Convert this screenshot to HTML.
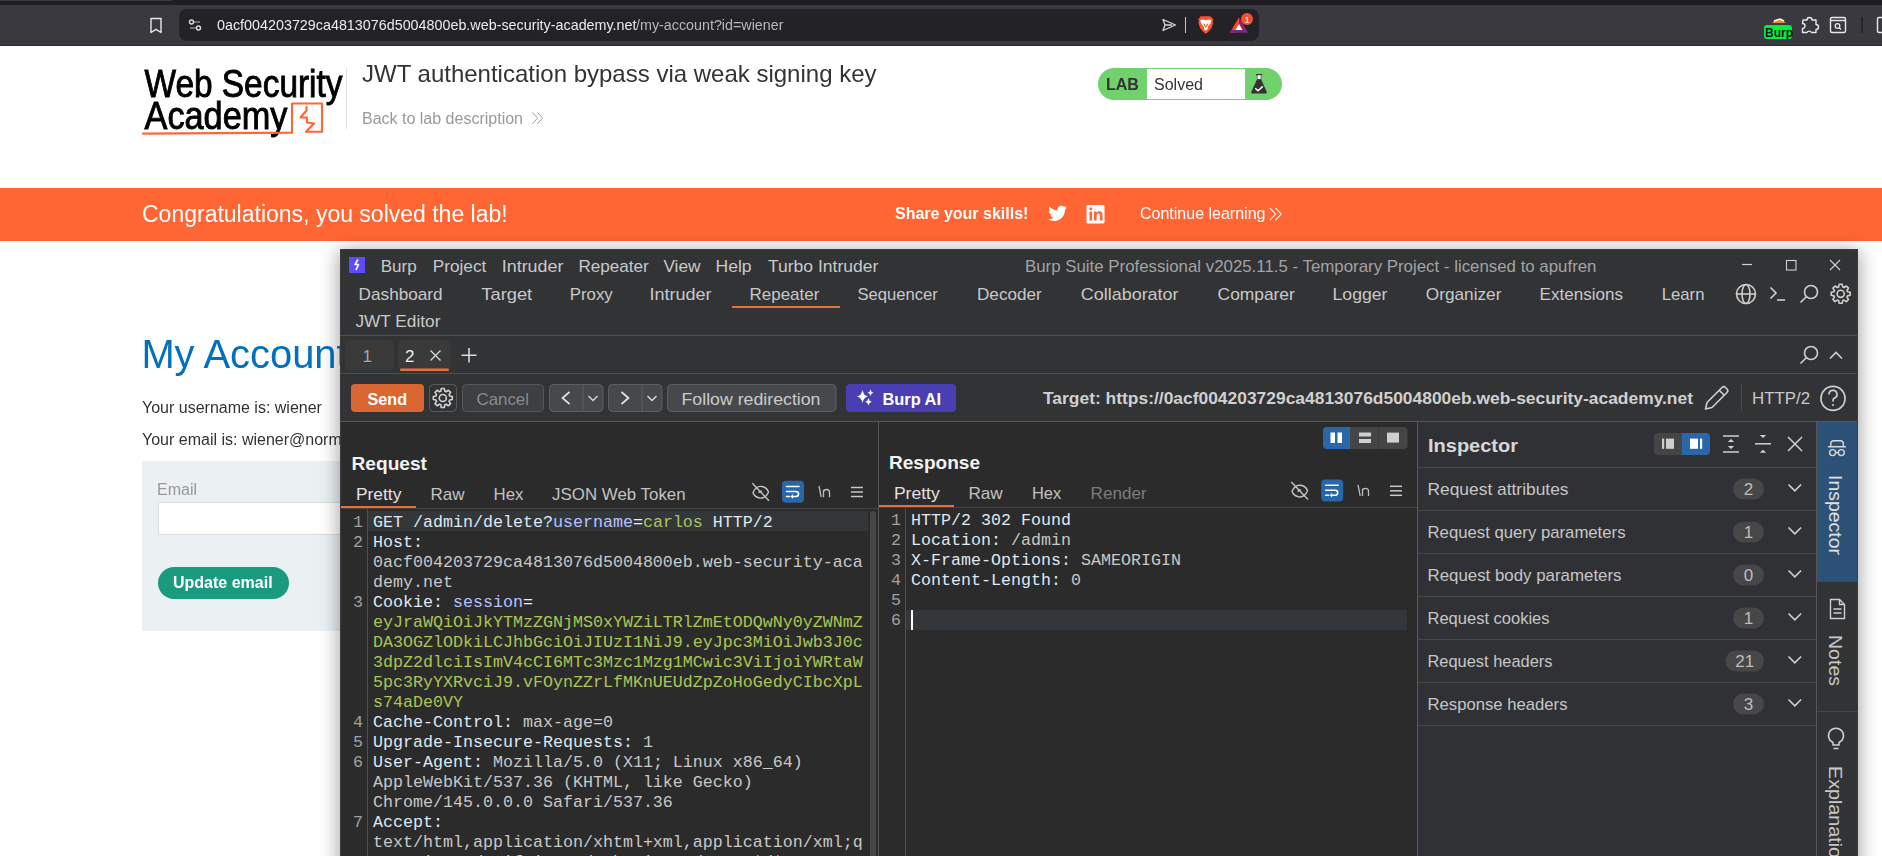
<!DOCTYPE html><html><head><meta charset="utf-8"><title>JWT authentication bypass via weak signing key</title>
<style>html,body{margin:0;padding:0;width:1882px;height:856px;overflow:hidden;background:#fff;font-family:"Liberation Sans",sans-serif}#win{position:absolute;left:340px;top:249px;width:1518px;height:620px;background:#323335;box-shadow:0 3px 18px 1px rgba(0,0,0,0.38);z-index:2}svg{position:absolute;left:0;top:0}</style></head><body>
<svg width="1882" height="856" viewBox="0 0 1882 856" style="z-index:1;will-change:transform">
<rect x="0" y="0" width="1882" height="5" rx="0" fill="#1e1d22" />
<rect x="0" y="0" width="172" height="1" rx="0" fill="#3a393f" />
<rect x="0" y="5" width="1882" height="41" rx="0" fill="#3a393f" />
<rect x="0" y="45" width="1882" height="1" rx="0" fill="#2a292e" />
<rect x="179" y="9" width="1080" height="32" rx="8" fill="#232227" />
<path d="M151 18.5 h10 v14 l-5 -3.2 l-5 3.2 z" fill="none" stroke="#e8e8e8" stroke-width="1.4" stroke-linejoin="round"/>
<circle cx="191.5" cy="22" r="2" fill="none" stroke="#e0e0e0" stroke-width="1.3"/><line x1="194" y1="22" x2="200" y2="22" stroke="#9a9a9a" stroke-width="1.3"/>
<circle cx="198.5" cy="28" r="2" fill="none" stroke="#e0e0e0" stroke-width="1.3"/><line x1="190" y1="28" x2="196" y2="28" stroke="#9a9a9a" stroke-width="1.3"/>
<text x="217" y="30" font-size="14.3" fill="#ececec" font-weight="normal" font-family="'Liberation Sans', sans-serif" textLength="419.5" lengthAdjust="spacingAndGlyphs" >0acf004203729ca4813076d5004800eb.web-security-academy.net</text>
<text x="636" y="30" font-size="14.3" fill="#b8b8b8" font-weight="normal" font-family="'Liberation Sans', sans-serif" textLength="147.5" lengthAdjust="spacingAndGlyphs" >/my-account?id=wiener</text>
<path d="M1163 19.5 L1175.5 25 L1163 30.5 L1165 25 Z M1165 25 H1172" fill="none" stroke="#d8d8d8" stroke-width="1.3" stroke-linejoin="round"/>
<rect x="1185" y="17" width="1" height="16" rx="0" fill="#c8c8c8" />
<path d="M1200.3 16.3 H1210.2 L1211.5 17.6 L1213.3 19 L1212.8 21.5 L1213.2 23 L1211.3 28.5 L1207.5 32.5 L1205.8 33.8 L1204.1 32.5 L1200.3 28.5 L1198.4 23 L1198.8 21.5 L1198.3 19 L1200.1 17.6 Z" fill="#fb542b"/>
<path d="M1200.2 20.2 L1202.8 19.4 L1205.8 20.3 L1208.8 19.4 L1211.4 20.2 L1210.5 23.5 L1208.2 26.3 L1207.2 29.8 L1205.8 30.6 L1204.4 29.8 L1203.4 26.3 L1201.1 23.5 Z" fill="#ffffff"/>
<path d="M1203.2 23.3 L1205 24.2 L1205.8 26.8 L1206.6 24.2 L1208.4 23.3 L1207.6 25.5 L1205.8 28 L1204 25.5 Z" fill="#fb542b"/>
<path d="M1239 17.5 L1248 32.5 H1230 Z" fill="#9e1f63"/><path d="M1239 17.5 L1230 32.5 H1236 L1239 23 Z" fill="#ff4724"/><path d="M1230 32.5 H1248 L1246.5 30 H1231.5 Z" fill="#662d91"/><path d="M1239 24 L1242.5 30 H1235.5 Z" fill="#fff"/>
<circle cx="1247" cy="19" r="6" fill="#f4512c"/>
<text x="1244.5" y="23" font-size="9" fill="#fff" font-weight="normal" font-family="'Liberation Sans', sans-serif" >1</text>
<rect x="1764" y="25" width="28" height="14" rx="3" fill="#00f03c" />
<text x="1765" y="37" font-size="12" fill="#111" font-weight="bold" font-family="'Liberation Sans', sans-serif" >Burp</text>
<path d="M1772 23 q6 -7 14 0 z" fill="#f08c1c"/><path d="M1774 21 l6 -2 l4 2" stroke="#fff" stroke-width="1.5" fill="none"/>
<path d="M1803 20 h4 a2.5 2.5 0 0 1 5 0 h4 v4.5 a2.5 2.5 0 0 1 0 5 v3 h-4.5 a2.5 2.5 0 0 0 -4.5 0 h-4.5 v-4 a2.5 2.5 0 0 0 0 -5 z" fill="none" stroke="#e8e8e8" stroke-width="1.4" stroke-linejoin="round"/>
<rect x="1830.5" y="17.5" width="15" height="15" rx="1.5" fill="none" stroke="#e8e8e8" stroke-width="1.4" />
<line x1="1830.5" y1="20.5" x2="1845.5" y2="20.5" stroke="#e8e8e8" stroke-width="1.4" />
<circle cx="1837.5" cy="26" r="2.3" fill="none" stroke="#e8e8e8" stroke-width="1.3"/><line x1="1839.2" y1="27.7" x2="1841" y2="29.5" stroke="#e8e8e8" stroke-width="1.3"/>
<rect x="1861" y="17" width="2" height="16" rx="0" fill="#27262b" />
<rect x="1877.5" y="17.5" width="8" height="15" rx="1.5" fill="none" stroke="#e8e8e8" stroke-width="1.4" />
<g id="logo">
<text x="144.5" y="96.5" font-size="38" fill="#000" font-weight="normal" font-family="'Liberation Sans', sans-serif" textLength="198" lengthAdjust="spacingAndGlyphs" stroke="#000" stroke-width="0.9">Web Security</text>
<text x="144.5" y="129" font-size="38" fill="#000" font-weight="normal" font-family="'Liberation Sans', sans-serif" textLength="143" lengthAdjust="spacingAndGlyphs" stroke="#000" stroke-width="0.9">Academy</text>
<path d="M143 133.6 Q220 132.8 292 132.6 V103.5 H322 V131.8 H306 L314 123.5 L307 122.5 V117.5 H300.5 L306.5 110.5 V107" stroke="#ff6633" stroke-width="2.1" fill="none" stroke-linejoin="round" stroke-linecap="round"/>
</g>
<rect x="346" y="68" width="1" height="61" rx="0" fill="#e0e0e0" />
<text x="362" y="82" font-size="24" fill="#333333" font-weight="normal" font-family="'Liberation Sans', sans-serif" >JWT authentication bypass via weak signing key</text>
<text x="362" y="124" font-size="16" fill="#999999" font-weight="normal" font-family="'Liberation Sans', sans-serif" >Back to lab description</text>
<path d="M532.4 112.3 l5.2 5.8 l-5.2 5.8 M537.4 112.3 l5.2 5.8 l-5.2 5.8" stroke="#9a9a9a" stroke-width="0.95" fill="none"/>
<rect x="1098" y="68" width="184" height="32" rx="16" fill="#70d16d" />
<rect x="1147" y="69" width="98" height="30" rx="0" fill="#ffffff" />
<text x="1106" y="89.5" font-size="16" fill="#333333" font-weight="bold" font-family="'Liberation Sans', sans-serif" >LAB</text>
<text x="1154" y="89.5" font-size="16" fill="#333333" font-weight="normal" font-family="'Liberation Sans', sans-serif" >Solved</text>
<path d="M1257.2 79 H1261 L1266.6 91.6 a1.3 1.3 0 0 1 -1.2 1.9 H1252.6 a1.3 1.3 0 0 1 -1.2 -1.9 Z" fill="#333"/>
<rect x="1256" y="74" width="6.2" height="1.4" fill="#333"/><rect x="1257.1" y="75.3" width="4" height="3.8" fill="#fff"/><rect x="1256.9" y="75.3" width="0.7" height="3.8" fill="#555"/><rect x="1260.6" y="75.3" width="0.7" height="3.8" fill="#555"/>
<path d="M1255.2 88.3 L1258 90.8 L1262.8 86.4" stroke="#fff" stroke-width="1.5" fill="none"/>
<rect x="0" y="188" width="1882" height="53" rx="0" fill="#ff6633" />
<text x="142" y="222" font-size="23" fill="#ffffff" font-weight="normal" font-family="'Liberation Sans', sans-serif" >Congratulations, you solved the lab!</text>
<text x="895" y="218.8" font-size="16" fill="#ffffff" font-weight="bold" font-family="'Liberation Sans', sans-serif" >Share your skills!</text>
<path d="M1067 207.5 c-0.7 0.3 -1.4 0.5 -2.2 0.6 c0.8 -0.5 1.4 -1.2 1.7 -2.1 c-0.7 0.4 -1.6 0.8 -2.4 0.9 c-0.7 -0.8 -1.7 -1.2 -2.8 -1.2 c-2.1 0 -3.9 1.7 -3.9 3.9 c0 0.3 0 0.6 0.1 0.9 c-3.2 -0.2 -6.1 -1.7 -8 -4.1 c-0.3 0.6 -0.5 1.2 -0.5 1.9 c0 1.3 0.7 2.5 1.7 3.2 c-0.6 0 -1.2 -0.2 -1.8 -0.5 c0 1.9 1.3 3.5 3.1 3.8 c-0.6 0.2 -1.2 0.2 -1.8 0.1 c0.5 1.5 1.9 2.7 3.6 2.7 c-1.3 1.1 -3 1.7 -4.8 1.7 c-0.3 0 -0.6 0 -0.9 -0.1 c1.7 1.1 3.8 1.7 5.9 1.7 c7.1 0 11 -5.9 11 -11 v-0.5 c0.8 -0.5 1.4 -1.2 1.9 -2 z" fill="#fff"/>
<rect x="1086.5" y="205" width="18" height="18.5" rx="1.5" fill="#ffffff" />
<path d="M1089.5 211.5 h2.6 v9 h-2.6 z M1090.8 207.3 a1.5 1.5 0 1 1 0 3 a1.5 1.5 0 1 1 0 -3 z M1094 211.5 h2.5 v1.3 c0.4 -0.8 1.4 -1.5 2.8 -1.5 c2.7 0 3.2 1.8 3.2 4.1 v5.1 h-2.6 v-4.5 c0 -1.1 0 -2.4 -1.5 -2.4 c-1.5 0 -1.8 1.2 -1.8 2.4 v4.5 h-2.6 z" fill="#ff6633"/>
<text x="1140" y="218.8" font-size="16" fill="#ffffff" font-weight="normal" font-family="'Liberation Sans', sans-serif" >Continue learning</text>
<path d="M1270 208 l5.6 6.1 l-5.6 6.1 M1275.6 208 l5.6 6.1 l-5.6 6.1" stroke="#fff" stroke-width="1.1" fill="none"/>
<text x="141.4" y="368" font-size="39.9" fill="#0071bc" font-weight="normal" font-family="'Liberation Sans', sans-serif" >My Account</text>
<text x="142" y="413" font-size="16" fill="#333333" font-weight="normal" font-family="'Liberation Sans', sans-serif" >Your username is: wiener</text>
<text x="142" y="445" font-size="16" fill="#333333" font-weight="normal" font-family="'Liberation Sans', sans-serif" >Your email is: wiener@normal-user.net</text>
<rect x="142" y="461" width="400" height="170" rx="0" fill="#ebf0f2" />
<text x="157" y="494.6" font-size="16" fill="#999999" font-weight="normal" font-family="'Liberation Sans', sans-serif" >Email</text>
<rect x="158.5" y="502.5" width="400" height="32" rx="0" fill="#ffffff" stroke="#dcdcdc" stroke-width="1" />
<rect x="158" y="567" width="131" height="32" rx="16" fill="#1a9b80" />
<text x="173" y="588" font-size="16" fill="#ffffff" font-weight="bold" font-family="'Liberation Sans', sans-serif" >Update email</text>
</svg>
<div id="win"></div>
<svg width="1882" height="856" viewBox="0 0 1882 856" style="z-index:3">
<clipPath id="wclip"><rect x="340" y="249" width="1518" height="607"/></clipPath>
<g clip-path="url(#wclip)">
<rect x="340" y="249" width="1518" height="607" rx="0" fill="#323335" />
<line x1="340.5" y1="249" x2="340.5" y2="856" stroke="#3c3c3e" stroke-width="1" />
<line x1="340" y1="249.5" x2="1858" y2="249.5" stroke="#3c3c3e" stroke-width="1" />
<rect x="349" y="257" width="16" height="16" rx="0" fill="#5b4cff" />
<path d="M358 259.5 l-3 5 h3.5 l-2.5 5.5" stroke="#fff" stroke-width="1.6" fill="none" stroke-linejoin="round"/>
<text x="380.7" y="272.2" font-size="17" fill="#c9c9c9" font-weight="normal" font-family="'Liberation Sans', sans-serif" textLength="36.0" lengthAdjust="spacingAndGlyphs" >Burp</text>
<text x="432.8" y="272.2" font-size="17" fill="#c9c9c9" font-weight="normal" font-family="'Liberation Sans', sans-serif" textLength="53.5" lengthAdjust="spacingAndGlyphs" >Project</text>
<text x="501.8" y="272.2" font-size="17" fill="#c9c9c9" font-weight="normal" font-family="'Liberation Sans', sans-serif" textLength="61.6" lengthAdjust="spacingAndGlyphs" >Intruder</text>
<text x="578.4" y="272.2" font-size="17" fill="#c9c9c9" font-weight="normal" font-family="'Liberation Sans', sans-serif" textLength="70.3" lengthAdjust="spacingAndGlyphs" >Repeater</text>
<text x="663.4" y="272.2" font-size="17" fill="#c9c9c9" font-weight="normal" font-family="'Liberation Sans', sans-serif" textLength="37.2" lengthAdjust="spacingAndGlyphs" >View</text>
<text x="715.6" y="272.2" font-size="17" fill="#c9c9c9" font-weight="normal" font-family="'Liberation Sans', sans-serif" textLength="36.0" lengthAdjust="spacingAndGlyphs" >Help</text>
<text x="768" y="272.2" font-size="17" fill="#c9c9c9" font-weight="normal" font-family="'Liberation Sans', sans-serif" textLength="110.3" lengthAdjust="spacingAndGlyphs" >Turbo Intruder</text>
<text x="1025" y="272" font-size="17" fill="#a3a3a3" font-weight="normal" font-family="'Liberation Sans', sans-serif" textLength="571.5" lengthAdjust="spacingAndGlyphs" >Burp Suite Professional v2025.11.5 - Temporary Project - licensed to apufren</text>
<line x1="1742" y1="264.5" x2="1752" y2="264.5" stroke="#d0d0d0" stroke-width="1.2" />
<rect x="1786.5" y="260.5" width="9.5" height="9.5" rx="0" fill="none" stroke="#d0d0d0" stroke-width="1.1" />
<path d="M1830 260 L1840 270 M1840 260 L1830 270" stroke="#d0d0d0" stroke-width="1.1"/>
<text x="358.6" y="300" font-size="17" fill="#c9c9c9" font-weight="normal" font-family="'Liberation Sans', sans-serif" textLength="84.0" lengthAdjust="spacingAndGlyphs" >Dashboard</text>
<text x="481.3" y="300" font-size="17" fill="#c9c9c9" font-weight="normal" font-family="'Liberation Sans', sans-serif" textLength="50.9" lengthAdjust="spacingAndGlyphs" >Target</text>
<text x="569.8" y="300" font-size="17" fill="#c9c9c9" font-weight="normal" font-family="'Liberation Sans', sans-serif" textLength="42.9" lengthAdjust="spacingAndGlyphs" >Proxy</text>
<text x="649.5" y="300" font-size="17" fill="#c9c9c9" font-weight="normal" font-family="'Liberation Sans', sans-serif" textLength="62.1" lengthAdjust="spacingAndGlyphs" >Intruder</text>
<text x="749.5" y="300" font-size="17" fill="#c9c9c9" font-weight="normal" font-family="'Liberation Sans', sans-serif" textLength="69.9" lengthAdjust="spacingAndGlyphs" >Repeater</text>
<text x="857.5" y="300" font-size="17" fill="#c9c9c9" font-weight="normal" font-family="'Liberation Sans', sans-serif" textLength="80.3" lengthAdjust="spacingAndGlyphs" >Sequencer</text>
<text x="977" y="300" font-size="17" fill="#c9c9c9" font-weight="normal" font-family="'Liberation Sans', sans-serif" textLength="64.7" lengthAdjust="spacingAndGlyphs" >Decoder</text>
<text x="1080.7" y="300" font-size="17" fill="#c9c9c9" font-weight="normal" font-family="'Liberation Sans', sans-serif" textLength="97.9" lengthAdjust="spacingAndGlyphs" >Collaborator</text>
<text x="1217.6" y="300" font-size="17" fill="#c9c9c9" font-weight="normal" font-family="'Liberation Sans', sans-serif" textLength="77.2" lengthAdjust="spacingAndGlyphs" >Comparer</text>
<text x="1332.5" y="300" font-size="17" fill="#c9c9c9" font-weight="normal" font-family="'Liberation Sans', sans-serif" textLength="55.0" lengthAdjust="spacingAndGlyphs" >Logger</text>
<text x="1425.8" y="300" font-size="17" fill="#c9c9c9" font-weight="normal" font-family="'Liberation Sans', sans-serif" textLength="75.6" lengthAdjust="spacingAndGlyphs" >Organizer</text>
<text x="1539.6" y="300" font-size="17" fill="#c9c9c9" font-weight="normal" font-family="'Liberation Sans', sans-serif" textLength="83.4" lengthAdjust="spacingAndGlyphs" >Extensions</text>
<text x="1661.7" y="300" font-size="17" fill="#c9c9c9" font-weight="normal" font-family="'Liberation Sans', sans-serif" textLength="42.8" lengthAdjust="spacingAndGlyphs" >Learn</text>
<rect x="732" y="306" width="108" height="2" rx="0" fill="#e8703a" />
<text x="355.4" y="327" font-size="17" fill="#c9c9c9" font-weight="normal" font-family="'Liberation Sans', sans-serif" textLength="85" lengthAdjust="spacingAndGlyphs" >JWT Editor</text>
<g stroke="#cfcfcf" stroke-width="1.6" fill="none">
<circle cx="1746" cy="294" r="9.5"/><ellipse cx="1746" cy="294" rx="4" ry="9.5"/><line x1="1736.5" y1="294" x2="1755.5" y2="294"/>
<path d="M1770.5 287.5 l5.5 5.5 l-5.5 5.5"/><line x1="1777" y1="300" x2="1785" y2="300"/>
<circle cx="1811" cy="292" r="6.5"/><line x1="1806.5" y1="296.5" x2="1800.5" y2="302.5"/>
</g>
<path d="M1838.62 287.01 L1839.20 284.32 L1842.20 284.32 L1842.78 287.01 A7.10 7.10 0 0 1 1844.04 287.53 L1846.34 286.03 L1848.47 288.16 L1846.97 290.46 A7.10 7.10 0 0 1 1847.49 291.72 L1850.18 292.30 L1850.18 295.30 L1847.49 295.88 A7.10 7.10 0 0 1 1846.97 297.14 L1848.47 299.44 L1846.34 301.57 L1844.04 300.07 A7.10 7.10 0 0 1 1842.78 300.59 L1842.20 303.28 L1839.20 303.28 L1838.62 300.59 A7.10 7.10 0 0 1 1837.36 300.07 L1835.06 301.57 L1832.93 299.44 L1834.43 297.14 A7.10 7.10 0 0 1 1833.91 295.88 L1831.22 295.30 L1831.22 292.30 L1833.91 291.72 A7.10 7.10 0 0 1 1834.43 290.46 L1832.93 288.16 L1835.06 286.03 L1837.36 287.53 A7.10 7.10 0 0 1 1838.62 287.01 Z" stroke="#cfcfcf" stroke-width="1.6" fill="none" stroke-linejoin="round"/>
<circle cx="1840.7" cy="293.8" r="3.55" stroke="#cfcfcf" stroke-width="1.6" fill="none"/>
<line x1="340" y1="335.5" x2="1858" y2="335.5" stroke="#4f4f4f" stroke-width="1" />
<rect x="345" y="340" width="49" height="31" rx="6" fill="#3a3a3a" />
<rect x="398" y="340" width="53" height="31" rx="6" fill="#3a3a3a" />
<text x="362.5" y="362" font-size="17" fill="#a8a8a8" font-weight="normal" font-family="'Liberation Sans', sans-serif" >1</text>
<text x="405" y="362" font-size="17" fill="#ececec" font-weight="normal" font-family="'Liberation Sans', sans-serif" >2</text>
<path d="M430.5 350.5 L440.5 360.5 M440.5 350.5 L430.5 360.5" stroke="#d8d8d8" stroke-width="1.3"/>
<rect x="400" y="368.5" width="49" height="2.5" rx="1.2" fill="#e8703a" />
<path d="M469 348 V362.5 M461.5 355.2 H476.5" stroke="#d8d8d8" stroke-width="1.6"/>
<g stroke="#cfcfcf" stroke-width="1.6" fill="none"><circle cx="1811" cy="353" r="6.5"/><line x1="1806.5" y1="357.5" x2="1800.5" y2="363.5"/><path d="M1830 358.5 l6 -6 l6 6"/></g>
<line x1="340" y1="373.5" x2="1858" y2="373.5" stroke="#4f4f4f" stroke-width="1" />
<rect x="351" y="384" width="73" height="28" rx="4" fill="#da6731" />
<text x="367.5" y="404.6" font-size="17" fill="#ffffff" font-weight="bold" font-family="'Liberation Sans', sans-serif" textLength="39.5" lengthAdjust="spacingAndGlyphs" >Send</text>
<rect x="429.5" y="384.5" width="27" height="27" rx="4" fill="none" stroke="#5a5a5a" stroke-width="1" />
<path d="M440.72 391.21 L441.30 388.52 L444.30 388.52 L444.88 391.21 A7.10 7.10 0 0 1 446.14 391.73 L448.44 390.23 L450.57 392.36 L449.07 394.66 A7.10 7.10 0 0 1 449.59 395.92 L452.28 396.50 L452.28 399.50 L449.59 400.08 A7.10 7.10 0 0 1 449.07 401.34 L450.57 403.64 L448.44 405.77 L446.14 404.27 A7.10 7.10 0 0 1 444.88 404.79 L444.30 407.48 L441.30 407.48 L440.72 404.79 A7.10 7.10 0 0 1 439.46 404.27 L437.16 405.77 L435.03 403.64 L436.53 401.34 A7.10 7.10 0 0 1 436.01 400.08 L433.32 399.50 L433.32 396.50 L436.01 395.92 A7.10 7.10 0 0 1 436.53 394.66 L435.03 392.36 L437.16 390.23 L439.46 391.73 A7.10 7.10 0 0 1 440.72 391.21 Z" stroke="#d4d4d4" stroke-width="1.6" fill="none" stroke-linejoin="round"/>
<circle cx="442.8" cy="398" r="3.55" stroke="#d4d4d4" stroke-width="1.6" fill="none"/>
<rect x="462.5" y="384.5" width="81" height="27" rx="4" fill="#3d4042" stroke="#575757" stroke-width="1" />
<text x="476.5" y="404.5" font-size="17" fill="#8a8a8a" font-weight="normal" font-family="'Liberation Sans', sans-serif" textLength="52.5" lengthAdjust="spacingAndGlyphs" >Cancel</text>
<rect x="549.5" y="384.5" width="53.5" height="27" rx="4" fill="#46494b" stroke="#5e5e5e" stroke-width="1" />
<line x1="583.0" y1="384.5" x2="583.0" y2="411.5" stroke="#5e5e5e" stroke-width="1" />
<path d="M569.5 392 l-7 6 l7 6" stroke="#e0e0e0" stroke-width="1.7" fill="none"/>
<path d="M588.5 396 l4.5 4.5 l4.5 -4.5" stroke="#d8d8d8" stroke-width="1.4" fill="none"/>
<rect x="608.5" y="384.5" width="53.5" height="27" rx="4" fill="#46494b" stroke="#5e5e5e" stroke-width="1" />
<line x1="642.0" y1="384.5" x2="642.0" y2="411.5" stroke="#5e5e5e" stroke-width="1" />
<path d="M621.5 392 l7 6 l-7 6" stroke="#e0e0e0" stroke-width="1.7" fill="none"/>
<path d="M647.5 396 l4.5 4.5 l4.5 -4.5" stroke="#d8d8d8" stroke-width="1.4" fill="none"/>
<rect x="667.5" y="384.5" width="168.5" height="27" rx="4" fill="#46494b" stroke="#5e5e5e" stroke-width="1" />
<text x="681.5" y="404.5" font-size="17" fill="#cbcbcb" font-weight="normal" font-family="'Liberation Sans', sans-serif" textLength="139" lengthAdjust="spacingAndGlyphs" >Follow redirection</text>
<rect x="846" y="384" width="110" height="28" rx="4" fill="#4a3fb2" />
<path d="M862.5 390 q0.9 5.5 5.5 6.5 q-4.6 1 -5.5 6.5 q-0.9 -5.5 -5.5 -6.5 q4.6 -1 5.5 -6.5 z M870.5 389.5 q0.5 2.8 3 3.3 q-2.5 0.5 -3 3.3 q-0.5 -2.8 -3 -3.3 q2.5 -0.5 3 -3.3 z M868.5 398 q0.6 3.2 3.3 3.8 q-2.7 0.6 -3.3 3.8 q-0.6 -3.2 -3.3 -3.8 q2.7 -0.6 3.3 -3.8 z" fill="#ffffff"/>
<text x="882.5" y="405" font-size="17" fill="#ffffff" font-weight="bold" font-family="'Liberation Sans', sans-serif" textLength="58.5" lengthAdjust="spacingAndGlyphs" >Burp AI</text>
<text x="1043" y="404" font-size="17" fill="#d0d0d0" font-weight="bold" font-family="'Liberation Sans', sans-serif" textLength="650" lengthAdjust="spacingAndGlyphs" >Target: https://0acf004203729ca4813076d5004800eb.web-security-academy.net</text>
<path d="M1705.5 409 l1.5 -6.5 l15 -15 a2.5 2.5 0 0 1 3.5 0 l1.5 1.5 a2.5 2.5 0 0 1 0 3.5 l-15 15 z M1719.5 390.5 l5 5" stroke="#cfcfcf" stroke-width="1.6" fill="none" stroke-linejoin="round"/>
<line x1="1741.5" y1="384" x2="1741.5" y2="412" stroke="#4a4a4a" stroke-width="1" />
<text x="1752" y="404" font-size="17" fill="#c9c9c9" font-weight="normal" font-family="'Liberation Sans', sans-serif" textLength="58" lengthAdjust="spacingAndGlyphs" >HTTP/2</text>
<circle cx="1833" cy="398.4" r="12" stroke="#cfcfcf" stroke-width="1.7" fill="none"/>
<path d="M1829 394.5 a4 4 0 1 1 5.5 3.6 q-1.5 0.7 -1.5 2.5 v1" stroke="#cfcfcf" stroke-width="1.7" fill="none"/><circle cx="1833" cy="405" r="1.1" fill="#cfcfcf"/>
<line x1="340" y1="421.5" x2="1858" y2="421.5" stroke="#575757" stroke-width="1" />
<rect x="341" y="422" width="537" height="434" rx="0" fill="#2b2b2b" />
<rect x="879" y="422" width="538" height="434" rx="0" fill="#2b2b2b" />
<rect x="1418" y="422" width="399" height="434" rx="0" fill="#303134" />
<line x1="878.5" y1="422" x2="878.5" y2="856" stroke="#575757" stroke-width="1" />
<line x1="1417.5" y1="422" x2="1417.5" y2="856" stroke="#5a5a5a" stroke-width="1" />
<line x1="1816.5" y1="422" x2="1816.5" y2="856" stroke="#575757" stroke-width="1" />
<text x="351.5" y="469.5" font-size="19" fill="#f2f2f2" font-weight="bold" font-family="'Liberation Sans', sans-serif" textLength="75.5" lengthAdjust="spacingAndGlyphs" >Request</text>
<text x="355.9" y="500" font-size="17" fill="#e2e2e2" font-weight="normal" font-family="'Liberation Sans', sans-serif" textLength="45.5" lengthAdjust="spacingAndGlyphs" >Pretty</text>
<text x="430.5" y="500" font-size="17" fill="#c2c2c2" font-weight="normal" font-family="'Liberation Sans', sans-serif" textLength="34.0" lengthAdjust="spacingAndGlyphs" >Raw</text>
<text x="493.6" y="500" font-size="17" fill="#c2c2c2" font-weight="normal" font-family="'Liberation Sans', sans-serif" textLength="29.8" lengthAdjust="spacingAndGlyphs" >Hex</text>
<text x="552.1" y="500" font-size="17" fill="#c2c2c2" font-weight="normal" font-family="'Liberation Sans', sans-serif" textLength="133.5" lengthAdjust="spacingAndGlyphs" >JSON Web Token</text>
<rect x="341" y="506" width="75" height="2" rx="0" fill="#e8703a" />
<line x1="341" y1="508.5" x2="878" y2="508.5" stroke="#444444" stroke-width="1" />
<g stroke="#c4c4c4" stroke-width="1.4" fill="none"><path d="M753.0 492.5 q3 -7 9 -6 q5 1 6.5 5.5 q-3 7 -9 6 q-5 -1 -6.5 -5.5 z"/><path d="M759.0 493 a2 2 0 0 1 3 -1.5"/><line x1="752.3" y1="483.2" x2="769.0" y2="500.8"/></g>
<rect x="782" y="480.8" width="22" height="22" rx="4" fill="#2a67a8"/>
<g stroke="#ffffff" stroke-width="1.5" fill="none" stroke-linecap="round"><line x1="786.5" y1="486.4" x2="799" y2="486.4"/><path d="M786.5 491.4 h9.5 a2.5 2.5 0 0 1 0 5 h-4"/><line x1="786.5" y1="496.4" x2="789.5" y2="496.4"/></g>
<path d="M790.5 496.4 l2.5 -2.3 v4.6 z" fill="#fff"/>
<g stroke="#bdbdbd" stroke-width="1.3" fill="none"><path d="M819.0 486 l2.2 11"/><path d="M823.5 497.2 v-7.5 M823.5 491.5 q1 -2 3 -2 q3 0 3 3 v4.7"/></g>
<g stroke="#c8c8c8" stroke-width="1.5"><line x1="850.9" y1="487.5" x2="862.9" y2="487.5"/><line x1="850.9" y1="492" x2="862.9" y2="492"/><line x1="850.9" y1="496.5" x2="862.9" y2="496.5"/></g>
<rect x="1323" y="427" width="84.5" height="22" rx="4" fill="#454545" />
<path d="M1327 427 h23 v22 h-23 a4 4 0 0 1 -4 -4 v-14 a4 4 0 0 1 4 -4 z" fill="#2a67a8"/>
<line x1="1378.5" y1="427" x2="1378.5" y2="449" stroke="#3a3a3a" stroke-width="1" />
<rect x="1330.5" y="432.5" width="4.5" height="10.5" rx="0" fill="#ffffff" />
<rect x="1337.5" y="432.5" width="4.5" height="10.5" rx="0" fill="#ffffff" />
<rect x="1359" y="432.5" width="12" height="4" rx="0" fill="#d0d0d0" />
<rect x="1359" y="439" width="12" height="4" rx="0" fill="#d0d0d0" />
<rect x="1387" y="432.6" width="12" height="10" rx="0" fill="#d0d0d0" />
<text x="889" y="469" font-size="19" fill="#f2f2f2" font-weight="bold" font-family="'Liberation Sans', sans-serif" textLength="91" lengthAdjust="spacingAndGlyphs" >Response</text>
<text x="893.9" y="499" font-size="17" fill="#e2e2e2" font-weight="normal" font-family="'Liberation Sans', sans-serif" textLength="45.9" lengthAdjust="spacingAndGlyphs" >Pretty</text>
<text x="968.4" y="499" font-size="17" fill="#c2c2c2" font-weight="normal" font-family="'Liberation Sans', sans-serif" textLength="34.3" lengthAdjust="spacingAndGlyphs" >Raw</text>
<text x="1031.9" y="499" font-size="17" fill="#c2c2c2" font-weight="normal" font-family="'Liberation Sans', sans-serif" textLength="29.2" lengthAdjust="spacingAndGlyphs" >Hex</text>
<text x="1090.6" y="499" font-size="17" fill="#7c7c7c" font-weight="normal" font-family="'Liberation Sans', sans-serif" textLength="56.2" lengthAdjust="spacingAndGlyphs" >Render</text>
<rect x="879" y="505" width="75" height="2" rx="0" fill="#e8703a" />
<line x1="879" y1="507.5" x2="1417" y2="507.5" stroke="#444444" stroke-width="1" />
<g stroke="#c4c4c4" stroke-width="1.4" fill="none"><path d="M1292.0 491.3 q3 -7 9 -6 q5 1 6.5 5.5 q-3 7 -9 6 q-5 -1 -6.5 -5.5 z"/><path d="M1298.0 491.8 a2 2 0 0 1 3 -1.5"/><line x1="1291.3" y1="482.0" x2="1308.0" y2="499.6"/></g>
<rect x="1321.2" y="479.6" width="22" height="22" rx="4" fill="#2a67a8"/>
<g stroke="#ffffff" stroke-width="1.5" fill="none" stroke-linecap="round"><line x1="1325.7" y1="485.2" x2="1338.2" y2="485.2"/><path d="M1325.7 490.2 h9.5 a2.5 2.5 0 0 1 0 5 h-4"/><line x1="1325.7" y1="495.2" x2="1328.7" y2="495.2"/></g>
<path d="M1329.7 495.2 l2.5 -2.3 v4.6 z" fill="#fff"/>
<g stroke="#bdbdbd" stroke-width="1.3" fill="none"><path d="M1358.0 484.8 l2.2 11"/><path d="M1362.5 496.0 v-7.5 M1362.5 490.3 q1 -2 3 -2 q3 0 3 3 v4.7"/></g>
<g stroke="#c8c8c8" stroke-width="1.5"><line x1="1390" y1="486.3" x2="1402" y2="486.3"/><line x1="1390" y1="490.8" x2="1402" y2="490.8"/><line x1="1390" y1="495.3" x2="1402" y2="495.3"/></g>
<line x1="367.5" y1="509" x2="367.5" y2="856" stroke="#505050" stroke-width="1" />
<rect x="368" y="511" width="500" height="20" rx="0" fill="#33373a" />
<rect x="870" y="511" width="6" height="360" rx="3" fill="#474747" />
<text x="363" y="527" font-size="16.667" fill="#a0a0a0" font-family="'Liberation Mono', monospace" text-anchor="end">1</text>
<text x="373" y="527" font-size="16.667" font-family="'Liberation Mono', monospace" xml:space="preserve" style="white-space:pre"><tspan fill="#dfe8f3">GET /admin/delete?</tspan><tspan fill="#b7c2ff">username</tspan><tspan fill="#e8f0ff">=</tspan><tspan fill="#abc654">carlos</tspan><tspan fill="#dfe8f3"> HTTP/2</tspan></text>
<text x="363" y="547" font-size="16.667" fill="#a0a0a0" font-family="'Liberation Mono', monospace" text-anchor="end">2</text>
<text x="373" y="547" font-size="16.667" font-family="'Liberation Mono', monospace" xml:space="preserve" style="white-space:pre"><tspan fill="#dfe8f3">Host:</tspan></text>
<text x="373" y="567" font-size="16.667" font-family="'Liberation Mono', monospace" xml:space="preserve" style="white-space:pre"><tspan fill="#c8c8c8">0acf004203729ca4813076d5004800eb.web-security-aca</tspan></text>
<text x="373" y="587" font-size="16.667" font-family="'Liberation Mono', monospace" xml:space="preserve" style="white-space:pre"><tspan fill="#c8c8c8">demy.net</tspan></text>
<text x="363" y="607" font-size="16.667" fill="#a0a0a0" font-family="'Liberation Mono', monospace" text-anchor="end">3</text>
<text x="373" y="607" font-size="16.667" font-family="'Liberation Mono', monospace" xml:space="preserve" style="white-space:pre"><tspan fill="#dfe8f3">Cookie: </tspan><tspan fill="#b7c2ff">session</tspan><tspan fill="#e8f0ff">=</tspan></text>
<text x="373" y="627" font-size="16.667" font-family="'Liberation Mono', monospace" xml:space="preserve" style="white-space:pre"><tspan fill="#abc654">eyJraWQiOiJkYTMzZGNjMS0xYWZiLTRlZmEtODQwNy0yZWNmZ</tspan></text>
<text x="373" y="647" font-size="16.667" font-family="'Liberation Mono', monospace" xml:space="preserve" style="white-space:pre"><tspan fill="#abc654">DA3OGZlODkiLCJhbGciOiJIUzI1NiJ9.eyJpc3MiOiJwb3J0c</tspan></text>
<text x="373" y="667" font-size="16.667" font-family="'Liberation Mono', monospace" xml:space="preserve" style="white-space:pre"><tspan fill="#abc654">3dpZ2dlciIsImV4cCI6MTc3Mzc1Mzg1MCwic3ViIjoiYWRtaW</tspan></text>
<text x="373" y="687" font-size="16.667" font-family="'Liberation Mono', monospace" xml:space="preserve" style="white-space:pre"><tspan fill="#abc654">5pc3RyYXRvciJ9.vFOynZZrLfMKnUEUdZpZoHoGedyCIbcXpL</tspan></text>
<text x="373" y="707" font-size="16.667" font-family="'Liberation Mono', monospace" xml:space="preserve" style="white-space:pre"><tspan fill="#abc654">s74aDe0VY</tspan></text>
<text x="363" y="727" font-size="16.667" fill="#a0a0a0" font-family="'Liberation Mono', monospace" text-anchor="end">4</text>
<text x="373" y="727" font-size="16.667" font-family="'Liberation Mono', monospace" xml:space="preserve" style="white-space:pre"><tspan fill="#dfe8f3">Cache-Control: </tspan><tspan fill="#c8c8c8">max-age=0</tspan></text>
<text x="363" y="747" font-size="16.667" fill="#a0a0a0" font-family="'Liberation Mono', monospace" text-anchor="end">5</text>
<text x="373" y="747" font-size="16.667" font-family="'Liberation Mono', monospace" xml:space="preserve" style="white-space:pre"><tspan fill="#dfe8f3">Upgrade-Insecure-Requests: </tspan><tspan fill="#c8c8c8">1</tspan></text>
<text x="363" y="767" font-size="16.667" fill="#a0a0a0" font-family="'Liberation Mono', monospace" text-anchor="end">6</text>
<text x="373" y="767" font-size="16.667" font-family="'Liberation Mono', monospace" xml:space="preserve" style="white-space:pre"><tspan fill="#dfe8f3">User-Agent: </tspan><tspan fill="#c8c8c8">Mozilla/5.0 (X11; Linux x86_64)</tspan></text>
<text x="373" y="787" font-size="16.667" font-family="'Liberation Mono', monospace" xml:space="preserve" style="white-space:pre"><tspan fill="#c8c8c8">AppleWebKit/537.36 (KHTML, like Gecko)</tspan></text>
<text x="373" y="807" font-size="16.667" font-family="'Liberation Mono', monospace" xml:space="preserve" style="white-space:pre"><tspan fill="#c8c8c8">Chrome/145.0.0.0 Safari/537.36</tspan></text>
<text x="363" y="827" font-size="16.667" fill="#a0a0a0" font-family="'Liberation Mono', monospace" text-anchor="end">7</text>
<text x="373" y="827" font-size="16.667" font-family="'Liberation Mono', monospace" xml:space="preserve" style="white-space:pre"><tspan fill="#dfe8f3">Accept:</tspan></text>
<text x="373" y="847" font-size="16.667" font-family="'Liberation Mono', monospace" xml:space="preserve" style="white-space:pre"><tspan fill="#c8c8c8">text/html,application/xhtml+xml,application/xml;q</tspan></text>
<text x="373" y="867" font-size="16.667" font-family="'Liberation Mono', monospace" xml:space="preserve" style="white-space:pre"><tspan fill="#c8c8c8">=0.9,image/avif,image/webp,image/apng,*/*;q=0.8,a</tspan></text>
<line x1="905.5" y1="508" x2="905.5" y2="856" stroke="#505050" stroke-width="1" />
<rect x="906" y="610" width="501" height="20" rx="0" fill="#33373a" />
<text x="901" y="525.2" font-size="16.667" fill="#a0a0a0" font-family="'Liberation Mono', monospace" text-anchor="end">1</text>
<text x="911" y="525.2" font-size="16.667" font-family="'Liberation Mono', monospace" xml:space="preserve" style="white-space:pre"><tspan fill="#dfe8f3">HTTP/2 302 Found</tspan></text>
<text x="901" y="545.2" font-size="16.667" fill="#a0a0a0" font-family="'Liberation Mono', monospace" text-anchor="end">2</text>
<text x="911" y="545.2" font-size="16.667" font-family="'Liberation Mono', monospace" xml:space="preserve" style="white-space:pre"><tspan fill="#dfe8f3">Location: </tspan><tspan fill="#c8c8c8">/admin</tspan></text>
<text x="901" y="565.2" font-size="16.667" fill="#a0a0a0" font-family="'Liberation Mono', monospace" text-anchor="end">3</text>
<text x="911" y="565.2" font-size="16.667" font-family="'Liberation Mono', monospace" xml:space="preserve" style="white-space:pre"><tspan fill="#dfe8f3">X-Frame-Options: </tspan><tspan fill="#c8c8c8">SAMEORIGIN</tspan></text>
<text x="901" y="585.2" font-size="16.667" fill="#a0a0a0" font-family="'Liberation Mono', monospace" text-anchor="end">4</text>
<text x="911" y="585.2" font-size="16.667" font-family="'Liberation Mono', monospace" xml:space="preserve" style="white-space:pre"><tspan fill="#dfe8f3">Content-Length: </tspan><tspan fill="#c8c8c8">0</tspan></text>
<text x="901" y="605.2" font-size="16.667" fill="#a0a0a0" font-family="'Liberation Mono', monospace" text-anchor="end">5</text>
<text x="901" y="625.2" font-size="16.667" fill="#a0a0a0" font-family="'Liberation Mono', monospace" text-anchor="end">6</text>
<rect x="911" y="610" width="2" height="20" rx="0" fill="#ffffff" />
<text x="1428" y="452" font-size="19" fill="#d8d8d8" font-weight="bold" font-family="'Liberation Sans', sans-serif" textLength="90" lengthAdjust="spacingAndGlyphs" >Inspector</text>
<rect x="1654" y="433" width="56" height="22" rx="4" fill="#454545" />
<path d="M1682 433 h24 a4 4 0 0 1 4 4 v14 a4 4 0 0 1 -4 4 h-24 z" fill="#2a67a8"/>
<rect x="1662" y="438.6" width="2.2" height="10.2" rx="0" fill="#d0d0d0" />
<rect x="1666" y="438.6" width="8" height="10.2" rx="0" fill="#d0d0d0" />
<rect x="1690" y="438.6" width="8" height="10.2" rx="0" fill="#ffffff" />
<rect x="1700" y="438.6" width="2.2" height="10.2" rx="0" fill="#ffffff" />
<g stroke="#cfcfcf" stroke-width="1.5" fill="none">
<line x1="1723" y1="436" x2="1739" y2="436"/><line x1="1723" y1="452" x2="1739" y2="452"/><line x1="1755" y1="443.8" x2="1771" y2="443.8"/>
</g>
<path d="M1731 439 l3.2 3 h-6.4 z M1731 449 l3.2 -3 h-6.4 z M1763 438 l3.2 -3 h-6.4 z M1763 449.7 l3.2 3 h-6.4 z" fill="#cfcfcf"/>
<g stroke="#cfcfcf" stroke-width="1.5" fill="none">
<path d="M1788 437 L1802 451 M1802 437 L1788 451"/>
</g>
<line x1="1418" y1="467.5" x2="1816" y2="467.5" stroke="#474747" stroke-width="1" />
<text x="1427.5" y="494.8" font-size="17" fill="#c6c6c6" font-weight="normal" font-family="'Liberation Sans', sans-serif" textLength="141" lengthAdjust="spacingAndGlyphs" >Request attributes</text>
<rect x="1733" y="478.5" width="31" height="21" rx="10.5" fill="#474747" />
<text x="1748.5" y="495.0" font-size="17" fill="#bdbdbd" font-weight="normal" font-family="'Liberation Sans', sans-serif" text-anchor="middle" >2</text>
<path d="M1788.5 484.5 l6.3 6.3 l6.3 -6.3" stroke="#d0d0d0" stroke-width="1.6" fill="none"/>
<line x1="1418" y1="510.5" x2="1816" y2="510.5" stroke="#474747" stroke-width="1" />
<text x="1427.5" y="537.8" font-size="17" fill="#c6c6c6" font-weight="normal" font-family="'Liberation Sans', sans-serif" textLength="198" lengthAdjust="spacingAndGlyphs" >Request query parameters</text>
<rect x="1733" y="521.5" width="31" height="21" rx="10.5" fill="#474747" />
<text x="1748.5" y="538.0" font-size="17" fill="#bdbdbd" font-weight="normal" font-family="'Liberation Sans', sans-serif" text-anchor="middle" >1</text>
<path d="M1788.5 527.5 l6.3 6.3 l6.3 -6.3" stroke="#d0d0d0" stroke-width="1.6" fill="none"/>
<line x1="1418" y1="553.5" x2="1816" y2="553.5" stroke="#474747" stroke-width="1" />
<text x="1427.5" y="580.8" font-size="17" fill="#c6c6c6" font-weight="normal" font-family="'Liberation Sans', sans-serif" textLength="194" lengthAdjust="spacingAndGlyphs" >Request body parameters</text>
<rect x="1733" y="564.5" width="31" height="21" rx="10.5" fill="#474747" />
<text x="1748.5" y="581.0" font-size="17" fill="#bdbdbd" font-weight="normal" font-family="'Liberation Sans', sans-serif" text-anchor="middle" >0</text>
<path d="M1788.5 570.5 l6.3 6.3 l6.3 -6.3" stroke="#d0d0d0" stroke-width="1.6" fill="none"/>
<line x1="1418" y1="596.5" x2="1816" y2="596.5" stroke="#474747" stroke-width="1" />
<text x="1427.5" y="623.8" font-size="17" fill="#c6c6c6" font-weight="normal" font-family="'Liberation Sans', sans-serif" textLength="122" lengthAdjust="spacingAndGlyphs" >Request cookies</text>
<rect x="1733" y="607.5" width="31" height="21" rx="10.5" fill="#474747" />
<text x="1748.5" y="624.0" font-size="17" fill="#bdbdbd" font-weight="normal" font-family="'Liberation Sans', sans-serif" text-anchor="middle" >1</text>
<path d="M1788.5 613.5 l6.3 6.3 l6.3 -6.3" stroke="#d0d0d0" stroke-width="1.6" fill="none"/>
<line x1="1418" y1="639.5" x2="1816" y2="639.5" stroke="#474747" stroke-width="1" />
<text x="1427.5" y="666.8" font-size="17" fill="#c6c6c6" font-weight="normal" font-family="'Liberation Sans', sans-serif" textLength="125" lengthAdjust="spacingAndGlyphs" >Request headers</text>
<rect x="1725.5" y="650.5" width="38.5" height="21" rx="10.5" fill="#474747" />
<text x="1744.75" y="667.0" font-size="17" fill="#bdbdbd" font-weight="normal" font-family="'Liberation Sans', sans-serif" text-anchor="middle" >21</text>
<path d="M1788.5 656.5 l6.3 6.3 l6.3 -6.3" stroke="#d0d0d0" stroke-width="1.6" fill="none"/>
<line x1="1418" y1="682.5" x2="1816" y2="682.5" stroke="#474747" stroke-width="1" />
<text x="1427.5" y="709.8" font-size="17" fill="#c6c6c6" font-weight="normal" font-family="'Liberation Sans', sans-serif" textLength="140" lengthAdjust="spacingAndGlyphs" >Response headers</text>
<rect x="1733" y="693.5" width="31" height="21" rx="10.5" fill="#474747" />
<text x="1748.5" y="710.0" font-size="17" fill="#bdbdbd" font-weight="normal" font-family="'Liberation Sans', sans-serif" text-anchor="middle" >3</text>
<path d="M1788.5 699.5 l6.3 6.3 l6.3 -6.3" stroke="#d0d0d0" stroke-width="1.6" fill="none"/>
<line x1="1418" y1="725.5" x2="1816" y2="725.5" stroke="#474747" stroke-width="1" />
<rect x="1817" y="422" width="40" height="159" rx="0" fill="#2d5177" />
<line x1="1857.5" y1="249" x2="1857.5" y2="856" stroke="#3b3b3d" stroke-width="1" />
<line x1="1817" y1="581.5" x2="1858" y2="581.5" stroke="#474747" stroke-width="1" />
<line x1="1817" y1="711.5" x2="1858" y2="711.5" stroke="#474747" stroke-width="1" />
<g stroke="#d8d8d8" stroke-width="1.4" fill="none"><path d="M1828 446.8 h18 M1830.8 446.3 v-2.5 a3 3 0 0 1 3 -3 h6.5 a3 3 0 0 1 3 3 v2.5"/><circle cx="1832.6" cy="452.6" r="3"/><circle cx="1841.3" cy="452.6" r="3"/><path d="M1835.6 452.6 h2.7"/></g>
<text x="1829" y="475" font-size="19" fill="#e0e0e0" font-weight="normal" font-family="'Liberation Sans', sans-serif" textLength="80" lengthAdjust="spacingAndGlyphs" transform="rotate(90 1829 475)">Inspector</text>
<g stroke="#cfcfcf" stroke-width="1.4" fill="none"><path d="M1830.5 599.5 h9 l5 5 v14 h-14 z M1839.5 599.5 v5 h5 M1833.5 609 h8 M1833.5 613 h8"/></g>
<text x="1829" y="635" font-size="19" fill="#c8c8c8" font-weight="normal" font-family="'Liberation Sans', sans-serif" textLength="51" lengthAdjust="spacingAndGlyphs" transform="rotate(90 1829 635)">Notes</text>
<g stroke="#cfcfcf" stroke-width="1.5" fill="none"><path d="M1833 745 v-2.5 a7.5 7.5 0 1 1 6 0 v2.5 z M1833.5 748.5 h5"/></g>
<text x="1829" y="766" font-size="19" fill="#c8c8c8" font-weight="normal" font-family="'Liberation Sans', sans-serif" textLength="103" lengthAdjust="spacingAndGlyphs" transform="rotate(90 1829 766)">Explanation</text>
</g>
</svg>
</body></html>
